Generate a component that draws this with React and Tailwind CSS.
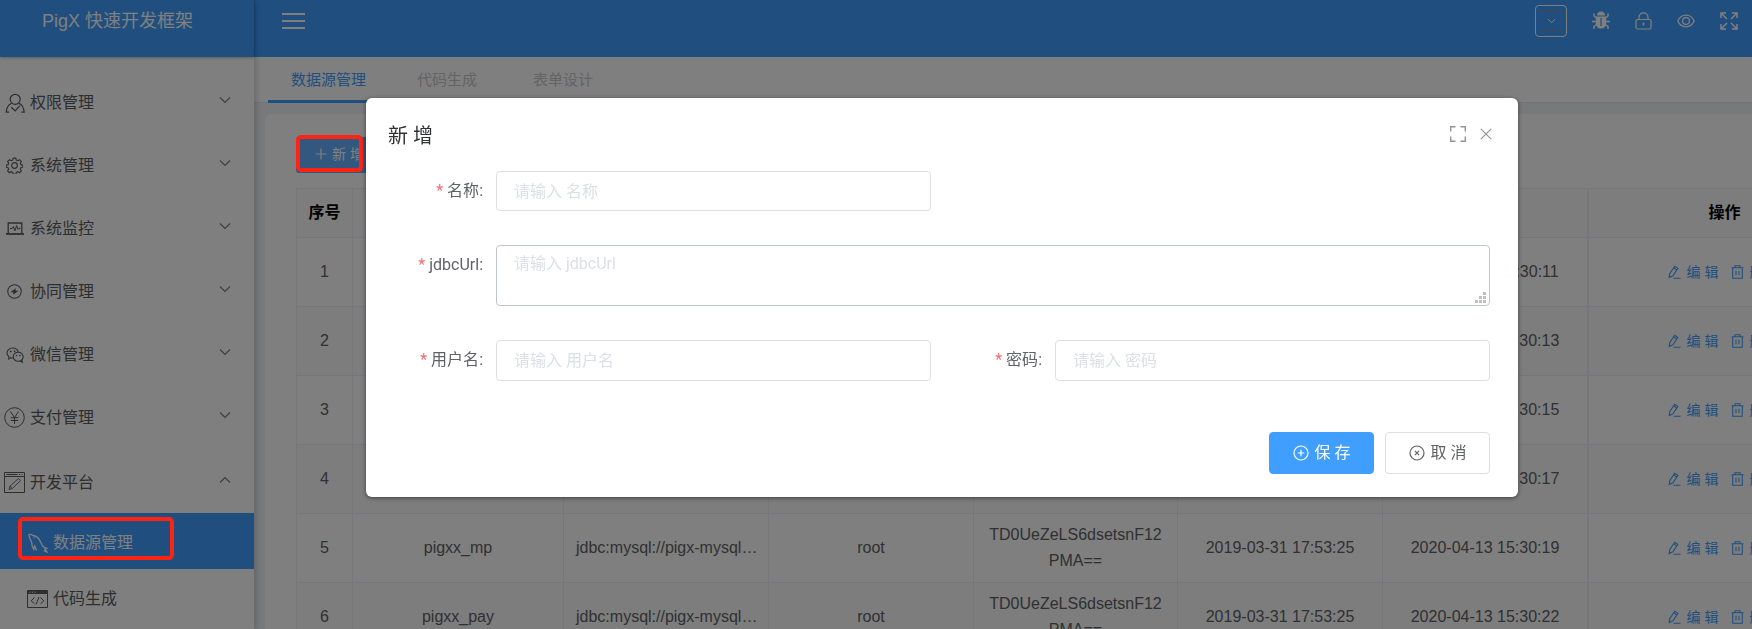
import React from "react";

function Svg({ w, h, box, children, sw = 1, className = "" }) {
  return (
    <svg
      width={w}
      height={h}
      viewBox={box || `0 0 ${w} ${h}`}
      fill="none"
      stroke="currentColor"
      strokeWidth={sw}
      className={`shrink-0 ${className}`}
      aria-hidden="true"
    >
      {children}
    </svg>
  );
}

const UserIcon = () => (
  <Svg w={20} h={20} sw={1.2}>
    <circle cx="10.2" cy="6.3" r="5" />
    <path d="M6.5 10.2C3 12 1.4 14.8 1.2 19.2H4M14 10.2C17.5 12 19 14.8 19.2 19.2H16.4M6.2 14.2l4 3.6 4.6-5.2" />
  </Svg>
);
const GearIcon = () => (
  <Svg w={17} h={17} box="0 0 18 18" sw={1.2}>
    <circle cx="9" cy="9" r="3" />
    <path d="M7.6 1.2h2.8l.5 2 1.6.7 1.8-1.1 2 2-1.1 1.8.6 1.5 2 .5v2.2l-2 .5-.6 1.6 1.1 1.8-2 2-1.8-1.1-1.6.7-.5 2H7.6l-.5-2-1.6-.7-1.8 1.1-2-2 1.1-1.8-.6-1.6-2-.5V8.6l2-.5.6-1.5-1.1-1.8 2-2 1.8 1.1 1.6-.7z" />
  </Svg>
);
const MonitorIcon = () => (
  <Svg w={18} h={13} sw={1.3}>
    <path d="M2.2 11V1h13.600v10" />
    <path d="M0 12h18" strokeWidth="1.800" />
    <path d="M4 6.500h2l1.300-2 1.600 4.300L10.600 3.500l1.400 4 1-1.200h1.600" strokeWidth="1" />
  </Svg>
);
const BoltIcon = () => (
  <Svg w={15} h={15} box="0 0 16 16" sw={1.1}>
    <circle cx="8" cy="8" r="7.200" />
    <path d="M9.300 4.500L3.500 8.700h3.300l-.4 2.800 6.100-4.400H9.200z" fill="currentColor" stroke="none" />
  </Svg>
);
const WechatIcon = () => (
  <Svg w={18} h={16} sw={1.1}>
    <path d="M12.2 5.2C11.8 2.8 9.5 1 6.7 1 3.6 1 1 3.2 1 6c0 1.600.8 2.900 2 3.800L2.600 12l2.200-1.200c.8.200 1.500.3 2.200.2" />
    <ellipse cx="12.200" cy="9.800" rx="5" ry="4.500" />
    <path d="M14 14l2.400 1.300-.5-2.300" />
    <g fill="currentColor" stroke="none">
      <circle cx="4.800" cy="4.400" r=".9" />
      <circle cx="8.600" cy="4.400" r=".9" />
      <circle cx="10.600" cy="8.500" r=".8" />
      <circle cx="13.900" cy="8.500" r=".8" />
    </g>
  </Svg>
);
const YenIcon = () => (
  <Svg w={21} h={21} sw={1}>
    <circle cx="10.5" cy="10.5" r="9.8" />
    <path d="M6.500 4.500l4 6 4-6M10.500 10.500v6.500M6.800 10.700h7.400M6.800 13.500h7.400" />
  </Svg>
);
const EditorIcon = () => (
  <Svg w={21} h={21} sw={1}>
    <path d="M.5.500h20v20H.500zM.500 4.500h20M2.500 2.500h11M15 2.500h1M17.500 2.500h1" />
    <path d="M5 17.500l1-3.500 8.500-7.500 2 2.200-8.300 7.800zM6 14l2.200 2.500" strokeWidth=".9" />
  </Svg>
);
const DolphinIcon = () => (
  <Svg w={20} h={20} sw={1.3}>
    <path d="M8.600 17.500L6.800 13l-1 3.500-1.800-4c.3-2.500-.6-4.300-1.800-6.300C1.500 4.500.8 2.500 1 1.500c1.200-.4 2.600 0 3.800 1 3.600.2 6.300 3 7.800 6.500 1 2.500 2 4.500 3.400 5.200l3 1.300-2.200.7 2 2.600-3-1.200" />
    <path d="M5.800 4.500l.6.900" />
  </Svg>
);
const CodeIcon = () => (
  <Svg w={21} h={18} sw={1}>
    <path d="M.5.5h20v17H.5z" />
    <path d="M1 1h19v3H1z" fill="currentColor" stroke="none" />
    <path d="M2.500 2.200h1M5 2.200h1M7.500 2.200h1" stroke="#fff" />
    <path d="M7.500 7.500L4.200 10.800l3.300 3M13.500 7.500l3.300 3.300-3.300 3M12 7l-3 7.500" />
  </Svg>
);
const Chevron = ({ up }) => (
  <Svg w={12} h={8} sw={1.2}>
    <path d={up ? "M1 6.500l5-5 5 5" : "M1 1.500l5 5 5-5"} />
  </Svg>
);
const PlusIcon = () => (
  <Svg w={12} h={12} sw={1.2}>
    <path d="M6 .5v11M.5 6h11" />
  </Svg>
);
const EditIcon = () => (
  <Svg w={13} h={14} sw={1.1}>
    <path d="M1.200 12.600l.5-4L6.700 1.300l3.200 2.100-5 7.400zM5.700 2.900l3.100 2.100M5.500 13.200h7" />
  </Svg>
);
const TrashIcon = () => (
  <Svg w={13} h={14} sw={1.1}>
    <path d="M.5 2.800h12M4 2.500V.8h5v1.700M1.700 3v10.200h9.600V3M5 5.800v4.500M8 5.800v4.500" />
  </Svg>
);

const menu = [
  { label: "权限管理", Icon: UserIcon },
  { label: "系统管理", Icon: GearIcon },
  { label: "系统监控", Icon: MonitorIcon },
  { label: "协同管理", Icon: BoltIcon },
  { label: "微信管理", Icon: WechatIcon },
  { label: "支付管理", Icon: YenIcon },
  { label: "开发平台", Icon: EditorIcon, open: true },
];

const subMenu = [
  { label: "数据源管理", Icon: DolphinIcon, active: true },
  { label: "代码生成", Icon: CodeIcon },
];

const rows = [
  { updated: "2020-04-13 15:30:11" },
  { updated: "2020-04-13 15:30:13" },
  { updated: "2020-04-13 15:30:15" },
  { updated: "2020-04-13 15:30:17" },
  {
    name: "pigxx_mp",
    url: "jdbc:mysql://pigx-mysql…",
    user: "root",
    pass: "TD0UeZeLS6dsetsnF12PMA==",
    created: "2019-03-31 17:53:25",
    updated: "2020-04-13 15:30:19",
  },
  {
    name: "pigxx_pay",
    url: "jdbc:mysql://pigx-mysql…",
    user: "root",
    pass: "TD0UeZeLS6dsetsnF12PMA==",
    created: "2019-03-31 17:53:25",
    updated: "2020-04-13 15:30:22",
  },
];

function Sidebar() {
  return (
    <aside className="relative z-10 flex w-[254px] shrink-0 flex-col bg-white shadow-[2px_0_6px_rgba(0,21,41,0.2)]">
      <div className="z-10 flex h-[57px] shrink-0 items-center bg-[#409eff] pb-4 pl-[42px] text-lg text-white shadow-[0_1px_3px_rgba(0,0,0,0.25)]">
        PigX 快速开发框架
      </div>
      <nav className="flex flex-col pt-[14px] text-base text-[#5a5c60]">
        {menu.map(({ label, Icon, open }) => (
          <button
            key={label}
            type="button"
            aria-expanded={!!open}
            className={`flex shrink-0 items-center pr-[23px] pl-1 text-left ${open ? "h-16 pt-[3px]" : "h-[63px]"}`}
          >
            <span className="flex w-[21px] justify-center">
              <Icon />
            </span>
            <span className="ml-[5px] flex-1">{label}</span>
            <span className="pb-[6px] text-[#7c7f85]">
              <Chevron up={open} />
            </span>
          </button>
        ))}
        {subMenu.map(({ label, Icon, active }) => (
          <a
            key={label}
            href="#"
            className={`flex h-14 shrink-0 items-center gap-[5px] pt-[3px] pl-[27px] ${active ? "bg-[#409eff] text-white" : ""}`}
          >
            <span className="flex w-[21px] justify-center">
              <Icon />
            </span>
            {label}
          </a>
        ))}
      </nav>
    </aside>
  );
}

function TopBar() {
  return (
    <header className="flex h-[57px] shrink-0 items-center justify-between bg-[#409eff] pr-[14px] pb-4 pl-7 text-white">
      <button type="button" aria-label="菜单">
        <Svg w={23} h={16} sw={2}>
          <path d="M0 1h23M0 8h23M0 15h23" />
        </Svg>
      </button>
      <div className="flex items-center gap-[25px]">
        <button
          type="button"
          aria-label="主题"
          className="flex h-8 w-8 items-center justify-center rounded border border-white"
        >
          <span className="flex h-[21px] w-[21px] items-center justify-center border border-[#8a8f98]">
            <Svg w={9} h={6} sw={1}>
              <path d="M.8 1l3.700 3.700L8.200 1" />
            </Svg>
          </span>
        </button>
        <button type="button" aria-label="日志">
          <Svg w={18} h={19} sw={1.5}>
            <path d="M5 4.500C5 2 6.600.6 9 .6S13 2 13 4.500z" fill="currentColor" stroke="none" />
            <path d="M3.800 5.500h10.400v6.500c0 3.500-2.200 5.500-5.200 5.500s-5.200-2-5.200-5.500z" fill="currentColor" stroke="none" />
            <path d="M4.500 7L2 5V2.500M13.500 7L16 5V2.500M4 10.500H0M14 10.500h4M4.500 13.500L2 15.500V18M13.500 13.500l2.500 2V18" />
            <path d="M9 7v8" stroke="#409eff" strokeWidth="1.200" />
          </Svg>
        </button>
        <button type="button" aria-label="锁屏">
          <Svg w={17} h={18} sw={1.2}>
            <rect x="1" y="7.500" width="15" height="9.500" rx="1.500" />
            <path d="M4 7.500V5.200C4 2.700 6 .9 8.500.9S13 2.700 13 5.200v2.300" />
            <path d="M8.500 10.500v3" strokeWidth="1.600" />
          </Svg>
        </button>
        <button type="button" aria-label="预览">
          <Svg w={18} h={14} sw={1.3}>
            <path d="M.8 7C2.600 3.200 5.500 1.200 9 1.200S15.400 3.200 17.200 7c-1.800 3.800-4.700 5.800-8.200 5.800S2.600 10.800.8 7z" />
            <circle cx="9" cy="7" r="3.400" />
          </Svg>
        </button>
        <button type="button" aria-label="全屏">
          <Svg w={18} h={18} sw={1.5}>
            <path d="M1 6V1h5M1 1l6 6M12 1h5v5M17 1l-6 6M1 12v5h5M1 17l6-6M17 12v5h-5M17 17l-6-6" />
          </Svg>
        </button>
      </div>
    </header>
  );
}

function Tabs() {
  return (
    <div className="flex h-[46px] shrink-0 border-b border-[#e4e7ed] bg-white pl-[14px] text-[15px] text-[#c8c8c8]">
      <button type="button" className="-mb-px border-b-[3px] border-[#409eff] px-[23px] pt-[3px] text-[#409eff]">
        数据源管理
      </button>
      <button type="button" className="px-7 pt-px">代码生成</button>
      <button type="button" className="px-7 pt-px">表单设计</button>
    </div>
  );
}

const cell = "border-b border-r border-[#ebeef5] px-3";

function DataTable() {
  return (
    <table className="w-[1564px] table-fixed border-separate border-spacing-0 border-t border-l border-[#ebeef5] text-center text-base leading-[26px] text-[#606266]">
      <colgroup>
        <col className="w-[56px]" />
        <col className="w-[211px]" />
        <col className="w-[205px]" />
        <col className="w-[205px]" />
        <col className="w-[204px]" />
        <col className="w-[205px]" />
        <col className="w-[206px]" />
        <col className="w-[272px]" />
      </colgroup>
      <thead>
        <tr className="h-[49px] bg-[#fafafa] text-black">
          <th className="border-r border-b border-[#ebeef5] font-bold">序号</th>
          <td className={cell} />
          <td className={cell} />
          <td className={cell} />
          <td className={cell} />
          <td className={cell} />
          <td className="border-r-2 border-b border-[#ebeef5]" />
          <th className={`${cell} font-bold`}>操作</th>
        </tr>
      </thead>
      <tbody>
        {rows.map((r, i) => (
          <tr key={r.updated} className="h-[69px] even:bg-[#fafafa]">
            <td className={cell}>{i + 1}</td>
            <td className={cell}>{r.name}</td>
            <td className={`${cell} whitespace-nowrap`}>{r.url}</td>
            <td className={cell}>{r.user}</td>
            <td className={`${cell} break-all`}>{r.pass}</td>
            <td className={cell}>{r.created}</td>
            <td className="border-r-2 border-b border-[#ebeef5] px-3">{r.updated}</td>
            <td className={cell}>
              <div className="flex items-center justify-center gap-3 text-sm text-[#409eff]">
                <button type="button" className="flex items-center gap-[6px]">
                  <EditIcon />编 辑
                </button>
                <button type="button" className="flex items-center gap-[6px]">
                  <TrashIcon />删 除
                </button>
              </div>
            </td>
          </tr>
        ))}
      </tbody>
    </table>
  );
}

const inputBox =
  "block w-full rounded border bg-white px-[17px] text-base text-[#606266] placeholder:text-[#dcdfe6] focus:outline-none";

function Field({ id, label, className = "", children }) {
  return (
    <div className={`flex items-start ${className}`}>
      <label htmlFor={id} className="w-[124px] shrink-0 pr-[13px] text-right text-base leading-10 text-[#606266]">
        <span className="mr-1 text-[#f56c6c]">*</span>
        {label}:
      </label>
      <div className="relative min-w-0 flex-1">{children}</div>
    </div>
  );
}

function Modal() {
  return (
    <div
      role="dialog"
      aria-modal="true"
      aria-labelledby="dialog-title"
      className="mr-[234px] ml-[366px] flex-1 self-start rounded-md bg-white shadow-[0_1px_4px_rgba(0,0,0,0.5)] font-[Roboto,'Noto_Sans_CJK_SC',sans-serif]"
    >
      <div className="flex h-[73px] items-center justify-between pt-[2px] pr-[26px] pl-[22px]">
        <h2 id="dialog-title" className="text-xl text-[#303133]">新 增</h2>
        <div className="flex items-center gap-[14px] pb-1 text-[#909399]">
          <button type="button" aria-label="最大化">
            <Svg w={16} h={16} sw={1.4}>
              <path d="M.7 5.500V.7h4.800M10.500.7h4.800v4.800M.7 10.500v4.800h4.800M15.300 10.500v4.800h-4.800" />
            </Svg>
          </button>
          <button type="button" aria-label="关闭">
            <Svg w={12} h={12} sw={1.2}>
              <path d="M.8.800l10.400 10.400M11.200.8L.8 11.200" />
            </Svg>
          </button>
        </div>
      </div>
      <form className="grid grid-cols-2 gap-y-[34px] pr-7 pl-[6px]" onSubmit={(e) => e.preventDefault()}>
        <Field id="name" label="名称">
          <input id="name" placeholder="请输入 名称" className={`${inputBox} h-10 border-[#dcdfe6]`} />
        </Field>
        <Field id="jdbcUrl" label="jdbcUrl" className="col-span-2">
          <textarea
            id="jdbcUrl"
            placeholder="请输入 jdbcUrl"
            className={`${inputBox} h-[61px] resize-none border-[#c0c4cc] py-[6px] leading-6`}
          />
          <svg
            width="11"
            height="11"
            viewBox="0 0 11 11"
            fill="#c0c0c0"
            className="pointer-events-none absolute right-1 bottom-[3px]"
            aria-hidden="true"
          >
            <path d="M8 0h3v3H8zM4 4h3v3H4zM8 4h3v3H8zM0 8h3v3H0zM4 8h3v3H4zM8 8h3v3H8z" />
          </svg>
        </Field>
        <Field id="username" label="用户名">
          <input id="username" placeholder="请输入 用户名" className={`${inputBox} h-[41px] border-[#dcdfe6]`} />
        </Field>
        <Field id="password" label="密码">
          <input
            id="password"
            type="password"
            placeholder="请输入 密码"
            className={`${inputBox} h-[41px] border-[#dcdfe6]`}
          />
        </Field>
      </form>
      <div className="flex justify-end gap-[11px] pt-[51px] pr-7 pb-[23px] text-base">
        <button
          type="button"
          className="flex h-[42px] w-[105px] items-center justify-center gap-[6px] rounded border border-[#409eff] bg-[#409eff] text-white"
        >
          <Svg w={16} h={16} sw={1.2}>
            <circle cx="8" cy="8" r="7" />
            <path d="M8 4.800v6.400M4.800 8h6.400" />
          </Svg>
          保 存
        </button>
        <button
          type="button"
          className="flex h-[42px] w-[105px] items-center justify-center gap-[6px] rounded border border-[#dcdfe6] bg-white text-[#606266]"
        >
          <Svg w={16} h={16} sw={1.2}>
            <circle cx="8" cy="8" r="7" />
            <path d="M5.900 5.900l4.200 4.200M10.100 5.900l-4.200 4.200" />
          </Svg>
          取 消
        </button>
      </div>
    </div>
  );
}

export default function App() {
  return (
    <div className="relative flex h-screen overflow-hidden bg-[#f0f2f5] font-['Liberation_Sans','Noto_Sans_CJK_SC',sans-serif]">
      <Sidebar />
      <div className="flex min-w-0 flex-1 flex-col">
        <TopBar />
        <Tabs />
        <main className="mt-[11px] ml-[11px] flex-1 overflow-hidden rounded-tl-md bg-white pt-[23px] pl-[31px]">
          <button
            type="button"
            className="mb-[15px] flex h-9 items-center gap-[5px] rounded-[3px] bg-[#66b1ff] px-[19px] pb-[2px] text-sm text-white"
          >
            <PlusIcon />新 增
          </button>
          <DataTable />
        </main>
      </div>

      <div className="fixed inset-0 z-20 bg-black/50" />
      <div className="pointer-events-none absolute top-[135px] left-[296px] z-20 h-[37px] w-[67px] rounded-[5px] border-4 border-[#ff2314]" />
      <div className="pointer-events-none absolute top-[517px] left-[18px] z-20 h-[43px] w-[156px] rounded-[5px] border-4 border-[#ff2314]" />
      <div className="fixed inset-0 z-30 flex pt-[98px]">
        <Modal />
      </div>
    </div>
  );
}
